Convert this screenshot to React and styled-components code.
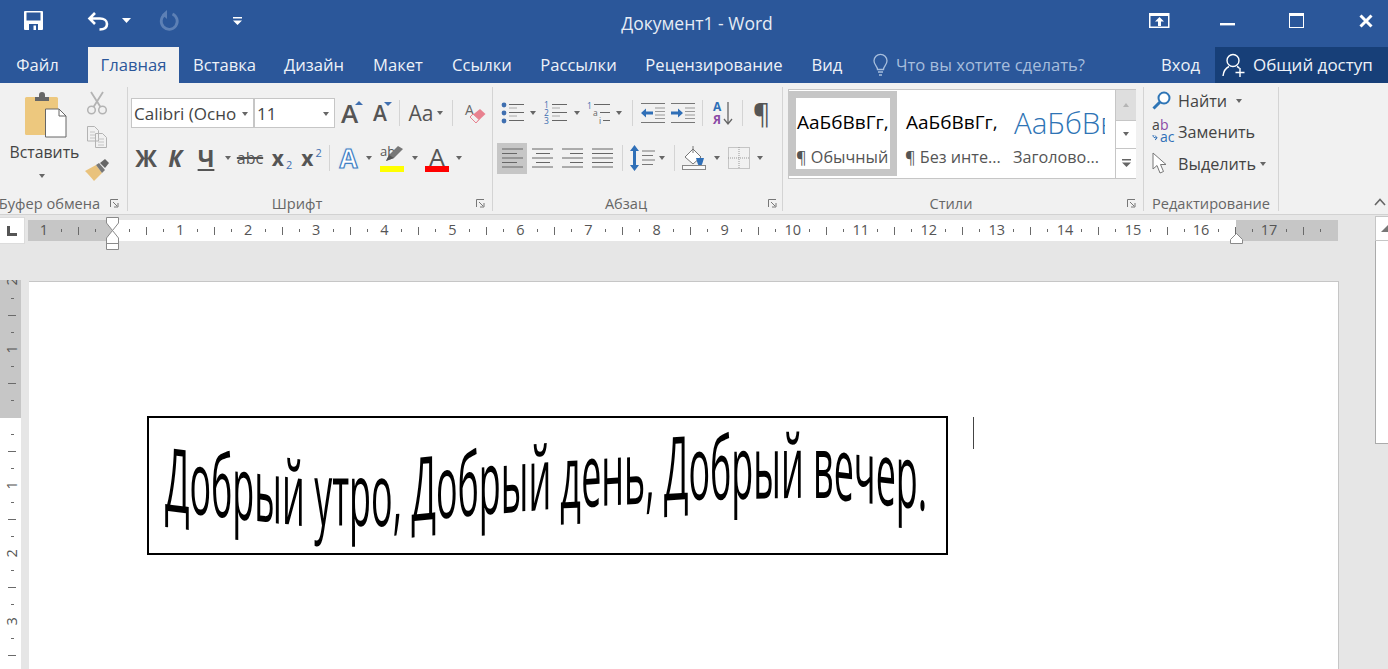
import React from 'react';
import styled, { createGlobalStyle } from 'styled-components';

const UI = `'Open Sans', 'Noto Sans', sans-serif`;
const BLUE = '#2b579a';
const GREY = '#666666';

const Global = createGlobalStyle`
  html, body { margin: 0; padding: 0; background: #e6e6e6; }
  * { box-sizing: border-box; }
  svg { display: block; flex: none; }
`;

const Window = styled.div`
  width: 1388px; height: 669px; overflow: hidden; display: flex; flex-direction: column;
  font-family: ${UI}; color: #444;
`;

/* ---------- Title bar ---------- */
const TitleBar = styled.header`
  height: 41px; flex: none; background: ${BLUE}; display: grid; grid-template-columns: 1fr auto 1fr; align-items: center;
`;
const QuickAccess = styled.div`display: flex; align-items: center; padding-left: 16px;`;
const QatButton = styled.div`
  width: ${p => p.$w}px; margin-left: ${p => p.$ml || 0}px; display: flex; justify-content: center; align-items: center; height: 41px;
`;
const DocTitle = styled.div`
  color: #e6ecf5; font-size: 17.5px; margin-left: 6px; height: 41px; line-height: 47px;
`;
const WindowControls = styled.div`display: flex; justify-content: flex-end; align-items: center; padding-right: 15px;`;
const WinButton = styled.div`margin-left: ${p => p.$ml || 0}px; display: flex;`;

/* ---------- Tabs ---------- */
const TabBar = styled.nav`
  height: 42px; flex: none; background: ${BLUE}; display: flex; align-items: flex-end;
`;
const Tab = styled.div`
  width: ${p => p.$w}px; height: 36px; flex: none; display: flex; align-items: center; justify-content: center; padding-bottom: 1px;
  margin-left: ${p => p.$ml || 0}px;
  font-size: 16.6px; color: ${p => (p.$active ? BLUE : '#eef2f8')}; background: ${p => (p.$active ? '#f1f1f1' : 'transparent')};
  white-space: nowrap;
`;
const SearchHint = styled.div`
  margin-left: 16px; height: 36px; display: flex; align-items: center; gap: 8px; color: #a7bedd; font-size: 16.6px; white-space: nowrap; padding-bottom: 1px;
`;
const Spacer = styled.div`flex: 1;`;
const SignIn = styled.div`height: 36px; display: flex; align-items: center; padding: 0 15px 1px 0; color: #eef2f8; font-size: 16.6px;`;
const ShareButton = styled.div`
  width: 173px; height: 36px; background: #173f78; display: flex; align-items: center; padding: 0 0 1px 7px; gap: 7px;
  color: #eef2f8; font-size: 17px; white-space: nowrap;
`;

/* ---------- Ribbon ---------- */
const Ribbon = styled.section`
  height: 132px; flex: none; background: #f1f1f1; border-bottom: 1px solid #d2d2d2; display: flex; position: relative;
`;
const Group = styled.div`
  width: ${p => p.$w}px; flex: none; margin: 4px 0 3px; border-right: 1px solid #d4d4d4; display: flex; flex-direction: column; position: relative;
`;
const GroupBody = styled.div`flex: 1; min-height: 0; display: flex;`;
const GroupFooter = styled.div`
  height: 20px; flex: none; display: flex; justify-content: center; align-items: center; padding: 3px ${p => p.$inset}px 0 0;
  font-size: 14.6px; color: #666; white-space: nowrap; position: relative;
`;
const Launcher = styled.div`position: absolute; right: ${p => p.$r}px; top: 8px;`;
const Collapse = styled.div`position: absolute; right: 2px; bottom: 8px;`;

const PasteColumn = styled.div`
  width: 84px; flex: none; display: flex; flex-direction: column; align-items: center; padding: 5px 0 0 7px;
`;
const PasteLabel = styled.div`font-size: 15.8px; color: #444; margin: 4px 0 0 -2px; line-height: 20px;`;
const PasteCaret = styled.div`margin: 12px 0 0 -7px;`;
const ClipColumn = styled.div`width: 26px; flex: none; display: flex; flex-direction: column; align-items: center;`;
const ClipSlot = styled.div`height: 33px; display: flex; align-items: center; justify-content: center;`;

const ToolStack = styled.div`
  padding: 11px 0 0 ${p => p.$pl}px; display: flex; flex-direction: column; gap: 15px;
`;
const ToolRow = styled.div`height: 30px; display: flex; align-items: center;`;
const Tool = styled.div`
  width: ${p => p.$w}px; height: 31px; margin-left: ${p => p.$ml || 0}px; flex: none; display: flex; align-items: center; justify-content: center;
  background: ${p => (p.$on ? '#c6c6c6' : 'transparent')}; color: #555; position: relative;
`;
const Caret = styled.span`
  display: block; width: 0; height: 0; border-left: 3.5px solid transparent; border-right: 3.5px solid transparent;
  border-top: 4px solid ${GREY};
`;
const CaretUp = styled(Caret)`transform: rotate(180deg); border-top-color: #b5b5b5;`;
const CaretSlot = styled.div`width: 10px; flex: none; display: flex; justify-content: center;`;
const CaretGap = styled.span`width: ${p => p.$w}px; flex: none;`;
const RowSep = styled.div`
  width: 1px; height: 26px; flex: none; background: #d4d4d4; margin: 0 ${p => p.$mr || 0}px 0 ${p => p.$ml || 0}px;
`;
const Combo = styled.div`
  width: ${p => p.$w}px; height: 30px; flex: none; background: #fff; border: 1px solid #c6c6c6; display: flex; align-items: center; justify-content: space-between;
  padding: 1px 5px 0 2px; font-size: 17px; color: #444; white-space: nowrap; overflow: hidden;
`;
const Glyph = styled.span`
  font-family: ${UI}; font-weight: ${p => p.$weight || 400}; font-size: ${p => p.$size}px; font-style: ${p => p.$italic ? 'italic' : 'normal'}; color: ${p => p.$color || '#555'};
  line-height: 1; white-space: nowrap; text-decoration: ${p => p.$deco || 'none'}; text-decoration-thickness: 1.5px; text-underline-offset: 2px;
`;
const Sub = styled.span`font-size: 11px; color: #3f6fb0; position: relative; top: ${p => p.$top}px; font-weight: 400; margin-left: 2px;`;
const TinyArrow = styled.span`
  position: absolute; top: ${p => p.$top}px; right: ${p => p.$r}px; width: 0; height: 0;
  border-left: 4px solid transparent; border-right: 4px solid transparent;
  ${p => (p.$down ? 'border-top: 4px solid #3f6fb0;' : 'border-bottom: 4px solid #3f6fb0;')}
`;
const OutlineA = styled.span`
  font-family: ${UI}; font-weight: 700; font-size: 26px; line-height: 1; color: #fff; -webkit-text-stroke: 1.2px #3f7fc4;
  text-shadow: 0 0 3px #bcd7f2;
`;
const ColorStack = styled.div`display: flex; flex-direction: column; align-items: center; position: relative; width: 24px; height: 28px;`;
const ColorBar = styled.div`position: absolute; left: 0; bottom: 0; width: 24px; height: 6px; background: ${p => p.$c};`;
const SmallAb = styled.span`font-size: 13px; position: absolute; left: 0; top: 0; color: #555; line-height: 14px;`;
const PenSlot = styled.span`position: absolute; left: 6px; top: 2px;`;

const Gallery = styled.div`
  width: 348px; height: 90px; margin: 2px 0 0 5px; background: #fff; border: 1px solid #c6c6c6; display: flex; padding-top: 1px;
`;
const StyleCard = styled.div`
  width: 108px; height: 85px; flex: none;
  border: ${p => (p.$selected ? '7px solid #c6c6c6' : '0')}; padding: ${p => (p.$selected ? '0' : '7px 8px')};
  display: flex; flex-direction: column; align-items: flex-start;
`;
const StyleSample = styled.div`
  height: 48px; width: ${p => p.$w || 92}px; overflow: hidden; display: flex; align-items: center; white-space: nowrap;
  font-size: ${p => p.$size || 19}px; font-weight: ${p => p.$weight || 400}; color: ${p => p.$color || '#000'};
  padding-left: 1px; flex: none;
`;
const StyleCaption = styled.div`font-size: 16.2px; color: #555; white-space: nowrap; line-height: 22px;`;
const GalleryScroll = styled.div`width: 21px; margin-left: 2px; margin-top: -1px; flex: none; display: flex; flex-direction: column; border-left: 1px solid #c6c6c6;`;
const ScrollCell = styled.div`
  height: ${p => p.$h}px; display: flex; align-items: center; justify-content: center; background: ${p => (p.$grey ? '#dedede' : '#fff')};
  border-bottom: ${p => (p.$last ? 0 : '1px solid #c6c6c6')};
`;
const EditColumn = styled.div`display: flex; flex-direction: column; padding: 0 0 0 8px; margin-top: -2px;`;
const EditRow = styled.div`height: 31.5px; display: flex; align-items: center; font-size: 16.2px; color: #444; white-space: nowrap;`;
const EditIcon = styled.div`width: 26px; flex: none; display: flex; align-items: center;`;
const EditCaret = styled.div`margin-left: ${p => p.$ml}px;`;

/* ---------- Workspace ---------- */
const Workspace = styled.main`flex: 1; min-height: 0; display: flex; background: #e6e6e6;`;
const MainColumn = styled.div`flex: 1; min-width: 0; display: flex; flex-direction: column;`;
const RulerRow = styled.div`height: 66px; flex: none; display: flex; align-items: flex-start;`;
const TabStop = styled.div`
  width: 24px; height: 25px; margin: 3px 4px 0 0; background: #fff; display: flex; align-items: center; justify-content: center; flex: none;
  box-shadow: 0 0 0 1px #dcdcdc;
`;
const Ruler = styled.div`
  width: 1310px; height: 21px; margin-top: 5px; position: relative; display: flex; align-items: center; padding-left: 7.5px;
  background: linear-gradient(90deg, #c6c6c6 0 84px, #fff 84px 1208px, #c6c6c6 1208px);
`;
const Slot = styled.div`
  width: 17.03px; flex: none; display: flex; align-items: center; justify-content: center; font-size: 14.5px; color: #555; line-height: 1;
`;
const Dot = styled.span`display: block; width: 1px; height: 3px; background: #6a6a6a;`;
const Dash = styled.span`display: block; width: 1px; height: 8px; background: #6a6a6a;`;
const IndentMark = styled.div`position: absolute; left: ${p => p.$x}px; top: ${p => p.$y}px;`;

const DocRow = styled.div`flex: 1; min-height: 0; display: flex; padding-right: 36px;`;
const VerticalRuler = styled.div`
  width: 21px; flex: none; margin: -1px 8px 0 0; overflow: hidden;
  background: linear-gradient(180deg, #c6c6c6 0 138px, #fff 138px);
`;
const VerticalTrack = styled.div`margin: -7.5px 0 0 3px; display: flex; flex-direction: column; width: 18px;`;
const VSlot = styled.div`
  height: 17.03px; flex: none; display: flex; align-items: center; justify-content: center; font-size: 14.5px; color: #555;
`;
const VNum = styled.span`display: block; transform: rotate(-90deg); line-height: 1;`;
const VDot = styled.span`display: block; width: 3px; height: 1px; background: #6a6a6a;`;
const VDash = styled.span`display: block; width: 8px; height: 1px; background: #6a6a6a;`;

const Page = styled.div`
  flex: 1; background: #fff; border-top: 1px solid #c6c6c6; border-right: 1px solid #c6c6c6; padding: 134px 0 0 118px;
  display: flex; align-items: flex-start;
`;
const WordArtBox = styled.div`
  width: 801px; height: 139px; flex: none; border: 2px solid #000; background: #fff; padding: 14px 0 0 16px;
`;
const WordArtLine = styled.div`
  width: 0; height: 88px; display: flex; transform: scaleX(${p => p.$sx}); transform-origin: 0 0;
  font-family: 'Open Sans', 'Noto Sans', sans-serif; font-weight: 500; font-size: 88px; line-height: 88px; color: #000;
`;
const ArtLetter = styled.span`display: block; flex: none; white-space: pre;`;
const TextCursor = styled.div`width: 1px; height: 32px; background: #444; margin: 1px 0 0 25px; flex: none;`;

const Scrollbar = styled.aside`width: 13px; flex: none; display: flex; flex-direction: column; padding-top: 1px; overflow: hidden;`;
const ScrollArrow = styled.div`height: 25px; background: #fff; border: 1px solid #c6c6c6; border-right: 0; display: flex; align-items: center; padding-left: 5px;`;
const ScrollThumb = styled.div`height: 203px; background: #fff; border: 1px solid #ababab; border-right: 0; border-top: 0;`;

/* ---------- Icons ---------- */
const Ic = ({ w, h, children }) => <svg width={w} height={h} viewBox={`0 0 ${w} ${h}`} fill="none" overflow="visible">{children}</svg>;

const SaveIcon = () => <Ic w={20} h={19}>
  <path d="M1 0H18a1 1 0 0 1 1 1V18a1 1 0 0 1-1 1H1a1 1 0 0 1-1-1V1a1 1 0 0 1 1-1Z" fill="#fff" />
  <rect x="2.5" y="1.5" width="14" height="8" fill={BLUE} />
  <rect x="5" y="13" width="9" height="6" fill={BLUE} />
  <rect x="9.5" y="14.5" width="2.5" height="4.5" fill="#fff" />
</Ic>;
const UndoIcon = () => <Ic w={22} h={20}>
  <path d="M8 2 2.5 7.5 8 13M2.5 7.5H13c4 0 7 2 7 5.5S17 18.5 12.5 18.5" stroke="#fff" strokeWidth="2.6" />
</Ic>;
const RedoIcon = () => <Ic w={21} h={21}>
  <path d="M7 4.5A8 8 0 1 0 14.5 4" stroke="#5d80b5" strokeWidth="2.8" />
  <path d="M9 0v9L4 4.5Z" fill="#5d80b5" />
</Ic>;
const WhiteCaret = () => <Ic w={9} h={5}><path d="M0 0H9L4.5 5Z" fill="#fff" /></Ic>;
const CustomizeIcon = () => <Ic w={9} h={8}><path d="M0 0H9V1.5H0ZM0 3.5H9L4.5 8Z" fill="#fff" /></Ic>;

const RibbonModeIcon = () => <Ic w={21} h={15}>
  <rect x=".75" y=".75" width="19" height="13.5" stroke="#fff" strokeWidth="1.5" />
  <path d="M1 1H20V3H1ZM10.5 4 15 8.5H12V13H9V8.5H6Z" fill="#fff" />
</Ic>;
const MinIcon = () => <Ic w={15} h={14}><rect y="9" width="15" height="2.4" fill="#fff" /></Ic>;
const MaxIcon = () => <Ic w={15} h={15}><rect x=".5" y=".5" width="14" height="14" stroke="#fff" /><rect width="15" height="3" fill="#fff" /></Ic>;
const CloseIcon = () => <Ic w={14} h={14}><path d="M1.5 1.5 12.5 12.5M12.5 1.5 1.5 12.5" stroke="#fff" strokeWidth="3" /></Ic>;

const BulbIcon = () => <Ic w={15} h={22}>
  <path d="M4.5 15.5C4.5 12 1 11 1 6.8a6.5 6.5 0 0 1 13 0C14 11 10.5 12 10.5 15.5Z" stroke="#a7bedd" strokeWidth="1.3" />
  <path d="M5 18h5M6 21h3" stroke="#a7bedd" strokeWidth="1.5" />
</Ic>;
const ShareIcon = () => <Ic w={24} h={24}>
  <circle cx="11" cy="7.5" r="6" stroke="#fff" strokeWidth="1.4" />
  <path d="M1 23c.5-5 3-8 6-9.5M15 13.5c1 .5 2 1.2 2.5 2" stroke="#fff" strokeWidth="1.4" />
  <path d="M18 15v9M13.5 19.5h9" stroke="#fff" strokeWidth="1.4" />
</Ic>;

const ClipboardIcon = () => <Ic w={42} h={46}>
  <rect x="0" y="5" width="33" height="38" rx="1.5" fill="#edc87e" />
  <path d="M10 5h4V3a3 3 0 0 1 6 0v2h4v4H10Z" fill="#666" />
  <path d="M20.5 17H34l7 7v21H20.5Z" fill="#fff" stroke="#666" />
  <path d="M34 17v7h7" stroke="#666" />
</Ic>;
const ScissorsIcon = () => <Ic w={20} h={23}>
  <circle cx="4.5" cy="18" r="3.8" stroke="#b3b3b3" strokeWidth="1.5" />
  <circle cx="15.5" cy="18" r="3.8" stroke="#b3b3b3" strokeWidth="1.5" />
  <path d="M6.5 15 16 0M13.5 15 4 0" stroke="#b3b3b3" strokeWidth="1.8" />
</Ic>;
const CopyIcon = () => <Ic w={20} h={22}>
  <path d="M.5.5h7l4 4V15H.5ZM8.5 7.5h7l4 4V21.5H8.5Z" fill="#f1f1f1" stroke="#b3b3b3" />
  <path d="M3 6h5M3 9h5M3 12h5M11 13h6M11 16h6M11 19h6" stroke="#c4c4c4" />
</Ic>;
const BrushIcon = () => <Ic w={24} h={22}>
  <path d="M0 12 11 6 17 14 9 22C6 18 3 15 0 12Z" fill="#e9c27c" />
  <path d="M11 6 14 4 20 11 17 14Z" fill="#777" />
  <path d="M15 4 20 0 24 4 20 9Z" fill="#666" />
</Ic>;
const EraserIcon = () => <Ic w={21} h={23}>
  <text x="0" y="13" fontFamily={UI} fontSize="14" fill="#666">A</text>
  <path d="M5 15 15 7 20.500 12 11 21Z" fill="#e8818f" />
  <path d="M5 15 8 12 14 17.500 11 21Z" fill="#f0f0f0" stroke="#e8818f" />
</Ic>;
const PenIcon = () => <Ic w={18} h={16}>
  <path d="M0 15 3 9 12 0 17 3 8 12Z" fill="#777" />
  <path d="M0 15 3 9 8 12Z" fill="#555" />
</Ic>;

const Lines = ({ rows, x1, x2, c = '#777' }) => rows.map((y, i) => <path key={i} d={`M${x1} ${y}H${Array.isArray(x2) ? x2[i] : x2}`} stroke={c} />);
const BulletsIcon = () => <Ic w={23} h={22}>
  {[3, 11, 19].map(y => <circle key={y} cx="3" cy={y} r="2.4" fill="#3f6fb0" />)}
  <Lines rows={[2.5, 10.5, 18.5]} x1={8} x2={23} c="#666" />
  <Lines rows={[6, 14]} x1={8} x2={16} c="#aaa" />
</Ic>;
const NumberIcon = () => <Ic w={23} h={22}>
  {[['1', 6], ['2', 14], ['3', 22]].map(([t, y]) => <text key={t} x="0" y={y} fontFamily={UI} fontSize="8.5" fill="#3f6fb0">{t}</text>)}
  <Lines rows={[2.5, 10.5, 18.5]} x1={8} x2={23} c="#666" />
  <Lines rows={[6, 14]} x1={8} x2={16} c="#aaa" />
</Ic>;
const MultiIcon = () => <Ic w={23} h={22}>
  <text x="0" y="7" fontFamily={UI} fontSize="8.5" fill="#3f6fb0">1</text>
  <text x="6" y="14" fontFamily={UI} fontSize="8.5" fill="#666">a</text>
  <text x="12" y="22" fontFamily={UI} fontSize="8.5" fill="#666">i</text>
  <path d="M7 2.5H23M13 10.5H23M16 18.5H23" stroke="#666" />
</Ic>;
const IndentIcon = ({ flip }) => <Ic w={24} h={22}>
  <path d={flip ? 'M0 9.5H7V6.5L12 11 7 15.5V12.5H0Z' : 'M12 9.5H5V6.5L0 11 5 15.5V12.5H12Z'} fill="#2f6fb7" />
  <Lines rows={[1.5, 20.5]} x1={0} x2={24} c="#777" />
  <Lines rows={[6, 9.5, 13, 16.5]} x1={14} x2={24} c="#999" />
</Ic>;
const AlignIcon = ({ mode }) => {
  const short = mode === 'left' ? [0, 15] : mode === 'center' ? [4, 18] : mode === 'right' ? [8, 21] : [0, 21];
  return <Ic w={21} h={22}>
    {[2, 6.5, 11, 15.5, 20].map((y, i) => <path key={y} d={i % 2 ? `M${short[0]} ${y}H${short[1]}` : `M0 ${y}H21`} stroke="#666" />)}
  </Ic>;
};
const SortIcon = () => <Ic w={20} h={26}>
  <text x="0" y="11" fontFamily={UI} fontWeight="700" fontSize="12" fill="#2f6fb7">А</text>
  <text x="0" y="24" fontFamily={UI} fontWeight="700" fontSize="12" fill="#8a4aa5">Я</text>
  <path d="M15 2V23M11 19l4 5 4-5" stroke="#666" strokeWidth="1.3" />
</Ic>;
const SpacingIcon = () => <Ic w={26} h={26}>
  <path d="M5.5 0 10 6H7V20H10L5.5 26 1 20H4V6H1Z" fill="#2f6fb7" />
  <Lines rows={[6, 10.5, 15, 19.5]} x1={13} x2={[26, 24, 26, 24]} c="#777" />
</Ic>;
const ShadingIcon = () => <Ic w={24} h={24}>
  <path d="M3 11 11 3 19 11 11 18Z" fill="#fff" stroke="#777" />
  <path d="M11 0V7" stroke="#777" />
  <path d="M14 12h8l-1.500 5a2.500 2.500 0 0 1-5 0Z" fill="#2f6fb7" />
  <rect x=".5" y="19.500" width="23" height="4" stroke="#888" fill="#f8f8f8" />
</Ic>;
const BordersIcon = () => <Ic w={22} h={22}>
  <rect x=".5" y=".5" width="21" height="21" stroke="#999" strokeDasharray="1 1" />
  <path d="M11 0V22M0 11H22" stroke="#999" strokeDasharray="1 1" />
</Ic>;
const MagnifierIcon = () => <Ic w={19} h={19}>
  <circle cx="12" cy="7" r="5.500" stroke="#2e75b6" strokeWidth="2" fill="#fff" />
  <path d="M8 11 1.500 17.500" stroke="#2e75b6" strokeWidth="3" />
</Ic>;
const ReplaceIcon = () => <Ic w={23} h={24}>
  <text x="0" y="10" fontFamily={UI} fontSize="14" fill="#444">a</text>
  <text x="8" y="10" fontFamily={UI} fontSize="14" fill="#8a4aa5">b</text>
  <text x="8" y="22" fontFamily={UI} fontSize="14" fill="#2f6fb7">ac</text>
  <path d="M1 15c0 2 1 3 4 3M3 15.500 5.200 18 3 20" stroke="#2f6fb7" strokeWidth="1" />
</Ic>;
const CursorIcon = () => <Ic w={17} h={23}>
  <path d="M1 1V17L5 13.500 8 21 11.500 19.500 8.500 12.500H14Z" fill="#fff" stroke="#777" />
</Ic>;
const LauncherIcon = () => <Ic w={9} h={9}>
  <path d="M.5 8V.5H8" stroke="#777" />
  <path d="M3 3 7 7M8 4V8H4" stroke="#777" />
</Ic>;
const ChevronUp = () => <Ic w={12} h={8}><path d="M1 7 6 1.500 11 7" stroke="#666" strokeWidth="1.6" /></Ic>;
const HourglassIcon = () => <Ic w={13} h={33}>
  <path d="M.5.500H12.500V6L6.500 13.500.5 6Z M6.500 13.500 12.500 21V32.500H.5V21Z" fill="#fff" stroke="#8a8a8a" />
  <path d="M0 26.500H13" stroke="#8a8a8a" />
</Ic>;
const HouseIcon = () => <Ic w={13} h={11}><path d="M6.500.5 12.500 6.500V10.500H.5V6.500Z" fill="#fff" stroke="#8a8a8a" /></Ic>;
const TabStopIcon = () => <Ic w={10} h={10}><path d="M0 0H3V7H10V10H0Z" fill="#555" /></Ic>;
const ScrollTriangle = () => <Ic w={7} h={7}><path d="M0 7 7 0V7Z" fill="#777" /></Ic>;
const MoreIcon = () => <Ic w={9} h={8}><path d="M0 0H9V1.500H0ZM0 3.500H9L4.500 8Z" fill="#666" /></Ic>;

/* ---------- Data ---------- */
const TABS = [
  ['Файл', 75], ['Главная', 91, true, 13], ['Вставка', 91], ['Дизайн', 88], ['Макет', 80], ['Ссылки', 88], ['Рассылки', 105], ['Рецензирование', 166], ['Вид', 60],
];
const H_LABELS = ['1', '', ...Array.from({ length: 17 }, (_, i) => String(i + 1))];
const V_LABELS = ['2', '1', '', '1', '2', '3'];

const ART = 'Добрый утро, Добрый день, Добрый вечер.';
const WAVE = [[0, 512], [5, 525], [10, 526], [13, 520], [18, 510], [20, 508], [26, 500], [31, 498], [33, 498], [38, 510]];
const waveAt = i => {
  for (let k = 0; k < WAVE.length - 1; k++) {
    const [a, ya] = WAVE[k]; const [b, yb] = WAVE[k + 1];
    if (i <= b) return { y: ya + ((yb - ya) * (i - a)) / (b - a), s: (yb - ya) / (b - a) };
  }
  return { y: 510, s: 0 };
};

const WordArt = () => {
  const sx = 0.408;
  return <WordArtLine $sx={sx}>
    {[...ART].map((c, i) => {
      const { y, s } = waveAt(i);
      const skew = (Math.atan((s / 20) * sx) * 180) / Math.PI;
      return <ArtLetter key={i} style={{ transform: `translateY(${(y - 510).toFixed(1)}px) skewY(${skew.toFixed(2)}deg)` }}>{c}</ArtLetter>;
    })}
  </WordArtLine>;
};

const Arrowed = () => <CaretSlot><Caret /></CaretSlot>;

export default function App() {
  return <Window>
    <Global />
    <TitleBar>
      <QuickAccess>
        <QatButton $w={35}><SaveIcon /></QatButton>
        <QatButton $w={43} $ml={25}><UndoIcon /></QatButton>
        <QatButton $w={14}><WhiteCaret /></QatButton>
        <QatButton $w={71}><RedoIcon /></QatButton>
        <QatButton $w={66}><CustomizeIcon /></QatButton>
      </QuickAccess>
      <DocTitle>Документ1 - Word</DocTitle>
      <WindowControls>
        <WinButton><RibbonModeIcon /></WinButton>
        <WinButton $ml={50}><MinIcon /></WinButton>
        <WinButton $ml={54}><MaxIcon /></WinButton>
        <WinButton $ml={55}><CloseIcon /></WinButton>
      </WindowControls>
    </TitleBar>

    <TabBar>
      {TABS.map(([t, w, a, ml]) => <Tab key={t} $w={w} $active={a} $ml={ml}>{t}</Tab>)}
      <SearchHint><BulbIcon />Что вы хотите сделать?</SearchHint>
      <Spacer />
      <SignIn>Вход</SignIn>
      <ShareButton><ShareIcon />Общий доступ</ShareButton>
    </TabBar>

    <Ribbon>
      <Group $w={128}>
        <GroupBody>
          <PasteColumn>
            <ClipboardIcon />
            <PasteLabel>Вставить</PasteLabel>
            <PasteCaret><Caret /></PasteCaret>
          </PasteColumn>
          <ClipColumn>
            <ClipSlot><ScissorsIcon /></ClipSlot>
            <ClipSlot><CopyIcon /></ClipSlot>
            <ClipSlot><BrushIcon /></ClipSlot>
          </ClipColumn>
        </GroupBody>
        <GroupFooter $inset={28}>Буфер обмена<Launcher $r={8}><LauncherIcon /></Launcher></GroupFooter>
      </Group>

      <Group $w={365}>
        <GroupBody>
          <ToolStack $pl={3}>
            <ToolRow>
              <Combo $w={123}>Calibri (Осно<Caret /></Combo>
              <Combo $w={81}>11<Caret /></Combo>
              <Tool $w={29}><Glyph $size={26} $weight={600}>A</Glyph><TinyArrow $top={3} $r={1} /></Tool>
              <Tool $w={32}><Glyph $size={21} $weight={600}>A</Glyph><TinyArrow $top={4} $r={4} $down /></Tool>
              <RowSep $ml={3} />
              <Tool $w={52}><Glyph $size={21} $weight={500}>Aa</Glyph><CaretGap $w={4} /><Caret /></Tool>
              <RowSep />
              <Tool $w={20} $ml={12}><EraserIcon /></Tool>
            </ToolRow>
            <ToolRow>
              <Tool $w={30}><Glyph $size={23} $weight={700}>Ж</Glyph></Tool>
              <Tool $w={28}><Glyph $size={23} $weight={700} $italic>К</Glyph></Tool>
              <Tool $w={34}><Glyph $size={23} $weight={700} $deco="underline">Ч</Glyph></Tool>
              <Arrowed />
              <Tool $w={34}><Glyph $size={16} $deco="line-through">abc</Glyph></Tool>
              <Tool $w={30}><Glyph $size={21} $weight={700}>x<Sub $top={3}>2</Sub></Glyph></Tool>
              <Tool $w={29}><Glyph $size={21} $weight={700}>x<Sub $top={-9}>2</Sub></Glyph></Tool>
              <RowSep $ml={3} $mr={3} />
              <Tool $w={31}><OutlineA>A</OutlineA></Tool>
              <Arrowed />
              <Tool $w={36}><ColorStack><SmallAb>ab</SmallAb><PenSlot><PenIcon /></PenSlot><ColorBar $c="#ffff00" /></ColorStack></Tool>
              <Arrowed />
              <Tool $w={34}><ColorStack><Glyph $size={26}>A</Glyph><ColorBar $c="#ff0000" /></ColorStack></Tool>
              <Arrowed />
            </ToolRow>
          </ToolStack>
        </GroupBody>
        <GroupFooter $inset={26}>Шрифт<Launcher $r={7}><LauncherIcon /></Launcher></GroupFooter>
      </Group>

      <Group $w={290}>
        <GroupBody>
          <ToolStack $pl={4}>
            <ToolRow>
              <Tool $w={31}><BulletsIcon /></Tool><Arrowed />
              <Tool $w={34}><NumberIcon /></Tool><Arrowed />
              <Tool $w={32}><MultiIcon /></Tool><Arrowed />
              <RowSep $ml={8} />
              <Tool $w={30} $ml={5}><IndentIcon /></Tool>
              <Tool $w={30}><IndentIcon flip /></Tool>
              <RowSep $ml={4} />
              <Tool $w={39}><SortIcon /></Tool>
              <RowSep />
              <Tool $w={37}><Glyph $size={27} $color="#555">¶</Glyph></Tool>
            </ToolRow>
            <ToolRow>
              <Tool $w={30} $on><AlignIcon mode="left" /></Tool>
              <Tool $w={30}><AlignIcon mode="center" /></Tool>
              <Tool $w={30}><AlignIcon mode="right" /></Tool>
              <Tool $w={30}><AlignIcon mode="justify" /></Tool>
              <RowSep $ml={5} />
              <Tool $w={31} $ml={3}><SpacingIcon /></Tool><Arrowed />
              <RowSep $ml={7} />
              <Tool $w={37}><ShadingIcon /></Tool><Arrowed />
              <Tool $w={33}><BordersIcon /></Tool><Arrowed />
            </ToolRow>
          </ToolStack>
        </GroupBody>
        <GroupFooter $inset={23}>Абзац<Launcher $r={5}><LauncherIcon /></Launcher></GroupFooter>
      </Group>

      <Group $w={361}>
        <GroupBody>
          <Gallery>
            <StyleCard $selected>
              <StyleSample $w={94}>АаБбВвГг,</StyleSample>
              <StyleCaption>¶ Обычный</StyleCaption>
            </StyleCard>
            <StyleCard>
              <StyleSample>АаБбВвГг,</StyleSample>
              <StyleCaption>¶ Без инте...</StyleCaption>
            </StyleCard>
            <StyleCard>
              <StyleSample $size={29.5} $color="#2e74b5" $weight={300}>АаБбВв</StyleSample>
              <StyleCaption>Заголово...</StyleCaption>
            </StyleCard>
            <GalleryScroll>
              <ScrollCell $h={32} $grey><CaretUp /></ScrollCell>
              <ScrollCell $h={28}><Caret /></ScrollCell>
              <ScrollCell $h={30} $last><MoreIcon /></ScrollCell>
            </GalleryScroll>
          </Gallery>
        </GroupBody>
        <GroupFooter $inset={24}>Стили<Launcher $r={7}><LauncherIcon /></Launcher></GroupFooter>
      </Group>

      <Group $w={135}>
        <GroupBody>
          <EditColumn>
            <EditRow><EditIcon><MagnifierIcon /></EditIcon>Найти<EditCaret $ml={9}><Caret /></EditCaret></EditRow>
            <EditRow><EditIcon><ReplaceIcon /></EditIcon>Заменить</EditRow>
            <EditRow><EditIcon><CursorIcon /></EditIcon>Выделить<EditCaret $ml={4}><Caret /></EditCaret></EditRow>
          </EditColumn>
        </GroupBody>
        <GroupFooter $inset={0}>Редактирование</GroupFooter>
      </Group>
      <Collapse><ChevronUp /></Collapse>
    </Ribbon>

    <Workspace>
      <MainColumn>
        <RulerRow>
          <TabStop><TabStopIcon /></TabStop>
          <Ruler>
            {H_LABELS.map((n, i) => <React.Fragment key={i}>
              <Slot>{n}</Slot><Slot><Dot /></Slot><Slot><Dash /></Slot><Slot><Dot /></Slot>
            </React.Fragment>)}
            <IndentMark $x={78} $y={-3}><HourglassIcon /></IndentMark>
            <IndentMark $x={1202} $y={13}><HouseIcon /></IndentMark>
          </Ruler>
        </RulerRow>
        <DocRow>
          <VerticalRuler>
            <VerticalTrack>
              {V_LABELS.map((n, i) => <React.Fragment key={i}>
                <VSlot><VNum>{n}</VNum></VSlot><VSlot><VDot /></VSlot><VSlot><VDash /></VSlot><VSlot><VDot /></VSlot>
              </React.Fragment>)}
            </VerticalTrack>
          </VerticalRuler>
          <Page>
            <WordArtBox><WordArt /></WordArtBox>
            <TextCursor />
          </Page>
        </DocRow>
      </MainColumn>
      <Scrollbar>
        <ScrollArrow><ScrollTriangle /></ScrollArrow>
        <ScrollThumb />
      </Scrollbar>
    </Workspace>
  </Window>;
}
